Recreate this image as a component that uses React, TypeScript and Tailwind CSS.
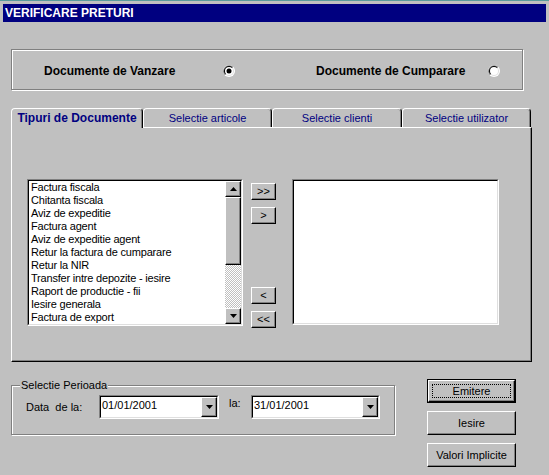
import React from "react";

const items = [
  "Factura fiscala",
  "Chitanta fiscala",
  "Aviz de expeditie",
  "Factura agent",
  "Aviz de expeditie agent",
  "Retur la factura de cumparare",
  "Retur la NIR",
  "Transfer intre depozite - iesire",
  "Raport de productie - fii",
  "Iesire generala",
  "Factura de export",
];

function Radio({ checked }: { checked?: boolean }) {
  return (
    <svg width="12" height="12" viewBox="0 0 12 12" className="shrink-0">
      <circle cx="6" cy="6" r="6" fill="#fff" />
      <path d="M10.24 1.76 A6 6 0 0 0 1.76 10.24 Z" fill="#808080" />
      <circle cx="6" cy="6" r="5" fill="#dfdfdf" />
      <path d="M9.54 2.46 A5 5 0 0 0 2.46 9.54 Z" fill="#000" />
      <circle cx="6" cy="6" r="4" fill="#fff" />
      {checked && <circle cx="6" cy="6" r="2.5" fill="#000" />}
    </svg>
  );
}

function Tri({ up }: { up?: boolean }) {
  return (
    <svg width="7" height="4" viewBox="0 0 7 4">
      <path d={up ? "M3.5 0 L7 4 L0 4 Z" : "M0 0 L7 0 L3.5 4 Z"} fill="#000" />
    </svg>
  );
}

const raised =
  "bg-[#c0c0c0] border border-t-white border-l-white border-r-black border-b-black shadow-[inset_-1px_-1px_0_#808080]";

function Sunken({ className, children }: { className?: string; children?: React.ReactNode }) {
  return (
    <div className={"border border-t-[#808080] border-l-[#808080] border-b-white border-r-white " + (className ?? "")}>
      <div className="w-full h-full border border-t-black border-l-black border-b-[#dfdfdf] border-r-[#dfdfdf] bg-white flex">
        {children}
      </div>
    </div>
  );
}

function SmallBtn({ label, className }: { label: string; className?: string }) {
  return (
    <div className={raised + " w-[25px] h-[17px] flex items-center justify-center text-[11px] leading-none " + (className ?? "")}>
      {label}
    </div>
  );
}

function Combo({ value, className }: { value: string; className?: string }) {
  return (
    <Sunken className={"h-[24px] " + (className ?? "")}>
      <div className="flex-1 pl-[1px] pt-[2px] text-[11px] leading-[13px]">{value}</div>
      <div className={raised + " w-[16px] h-full flex items-center justify-center"}>
        <Tri />
      </div>
    </Sunken>
  );
}

export default function App() {
  return (
    <div className="w-[549px] h-[475px] bg-[#c0c0c0] overflow-hidden text-black font-['Liberation_Sans',Arial,sans-serif]">
      <div className="h-[4px] border-t border-t-[#5a9c9c]" />
      <div className="ml-[3px] w-[543px] h-[18px] bg-[#000080] text-white text-[12px] font-bold leading-[18px] pl-[2px]">
        VERIFICARE PRETURI
      </div>

      <div className="mt-[27px] ml-[11px] w-[512px] h-[41px] border border-[#808080] shadow-[inset_1px_1px_0_#fff,1px_1px_0_#fff] flex items-center pt-[2px]">
        <span className="ml-[32px] w-[179px] text-[12px] font-bold">Documente de Vanzare</span>
        <Radio checked />
        <span className="ml-[81px] w-[172px] text-[12px] font-bold">Documente de Cumparare</span>
        <Radio />
      </div>

      <div className="mt-[18px] ml-[11px] flex items-start h-[19px] relative z-10">
        <div className="w-[132px] h-[20px] bg-[#c0c0c0] border-t border-l border-white border-r border-r-black shadow-[inset_-1px_0_0_#808080] rounded-t-[4px] flex items-center justify-center text-[12px] font-bold text-[#000080] pb-[1px]">
          Tipuri de Documente
        </div>
        {[
          ["Selectie articole", "w-[129px]"],
          ["Selectie clienti", "w-[130px]"],
          ["Selectie utilizator", "w-[129px]"],
        ].map(([t, w]) => (
          <div
            key={t}
            className={
              w +
              " h-[19px] border-t border-l border-white border-r border-r-black shadow-[inset_-1px_0_0_#808080] rounded-t-[4px] flex items-center justify-center text-[11px] text-[#000080]"
            }
          >
            {t}
          </div>
        ))}
      </div>

      <div className="ml-[11px] w-[521px] h-[235px] border border-t-white border-l-white border-r-black border-b-black shadow-[inset_-1px_-1px_0_#808080] flex items-start pt-[51px] pl-[15px]">
        <Sunken className="w-[216px] h-[147px]">
          <div className="flex-1 pl-[2px] pt-[0px] text-[11px] leading-[13px] tracking-[-0.2px] overflow-hidden">
            {items.map((i) => (
              <div key={i} className="whitespace-nowrap">
                {i}
              </div>
            ))}
          </div>
          <div className="w-[16px] flex flex-col">
            <div className={raised + " h-[16px] flex items-center justify-center"}>
              <Tri up />
            </div>
            <div className={raised + " h-[68px]"} />
            <div className="flex-1 bg-[repeating-conic-gradient(#c0c0c0_0_25%,#fff_0_50%)] bg-[length:2px_2px]" />
            <div className={raised + " h-[16px] flex items-center justify-center"}>
              <Tri />
            </div>
          </div>
        </Sunken>
        <div className="ml-[8px] flex flex-col">
          <SmallBtn label=">>" className="mt-[4px]" />
          <SmallBtn label=">" className="mt-[7px]" />
          <SmallBtn label="<" className="mt-[63px]" />
          <SmallBtn label="<<" className="mt-[7px]" />
        </div>
        <Sunken className="ml-[16px] w-[207px] h-[146px]" />
      </div>

      <div className="flex items-start">
        <div className="mt-[23px] ml-[11px] w-[384px] h-[50px] relative border border-[#808080] shadow-[inset_1px_1px_0_#fff,1px_1px_0_#fff] flex items-start">
          <span className="absolute left-[8px] -top-[7px] px-[1px] bg-[#c0c0c0] text-[11px] leading-[13px]">
            Selectie Perioada
          </span>
          <span className="ml-[14px] mt-[15px] w-[73px] text-[11px] leading-[13px] whitespace-pre">Data  de la:</span>
          <Combo value="01/01/2001" className="mt-[9px] w-[120px]" />
          <span className="ml-[10px] mt-[11px] w-[22px] text-[11px] leading-[13px]">la:</span>
          <Combo value="31/01/2001" className="mt-[9px] w-[129px]" />
        </div>
        <div className="ml-[32px] mt-[17px] w-[89px] flex flex-col gap-[8px] text-[11px]">
          <div className="h-[24px] border border-black">
            <div className={raised + " h-full p-[3px]"}>
              <div className="h-full border border-dotted border-black flex items-center justify-center">Emitere</div>
            </div>
          </div>
          <div className={raised + " h-[24px] flex items-center justify-center"}>Iesire</div>
          <div className={raised + " h-[24px] flex items-center justify-center"}>Valori Implicite</div>
        </div>
      </div>
    </div>
  );
}
